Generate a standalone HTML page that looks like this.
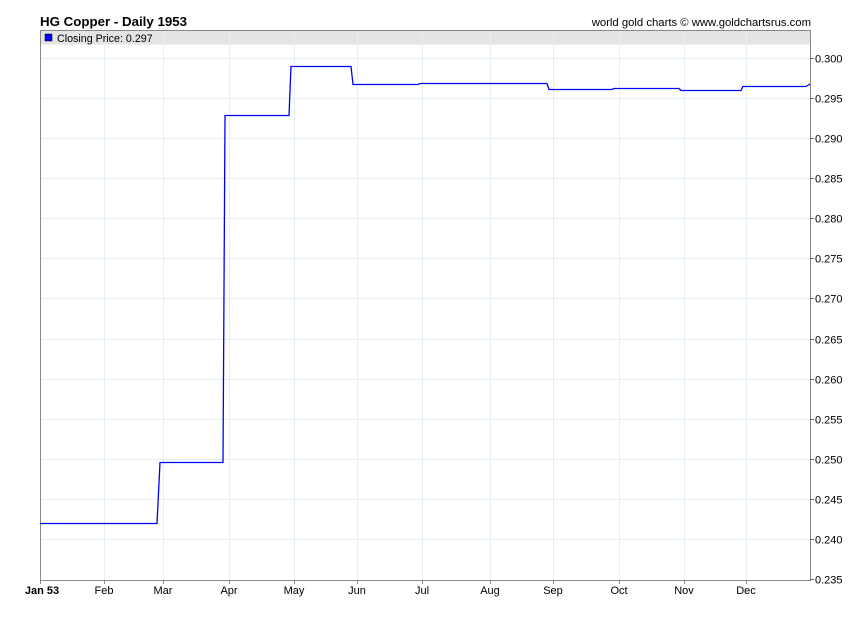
<!DOCTYPE html>
<html><head><meta charset="utf-8"><style>
body{margin:0;background:#fff;width:850px;height:616px;overflow:hidden;font-family:"Liberation Sans",Arial,sans-serif}
</style></head><body>
<svg width="850" height="616" xmlns="http://www.w3.org/2000/svg" font-family="Liberation Sans, Arial, sans-serif">
<rect x="40.5" y="30.5" width="770" height="14" fill="#e4e4e4"/>
<g stroke="#e3eef8" stroke-width="1">
<line x1="104.5" y1="30" x2="104.5" y2="580"/>
<line x1="163.5" y1="30" x2="163.5" y2="580"/>
<line x1="229.5" y1="30" x2="229.5" y2="580"/>
<line x1="294.5" y1="30" x2="294.5" y2="580"/>
<line x1="357.5" y1="30" x2="357.5" y2="580"/>
<line x1="422.5" y1="30" x2="422.5" y2="580"/>
<line x1="490.5" y1="30" x2="490.5" y2="580"/>
<line x1="553.5" y1="30" x2="553.5" y2="580"/>
<line x1="619.5" y1="30" x2="619.5" y2="580"/>
<line x1="684.5" y1="30" x2="684.5" y2="580"/>
<line x1="746.5" y1="30" x2="746.5" y2="580"/>
</g>
<g stroke="#e3eef8" stroke-width="1" id="hg"></g>
<g stroke="#888" stroke-width="1" fill="none">
<path d="M40.5 30.5 H810.5 V580.5 H40.5 Z"/>
</g>
<path d="M40 523.5 H157 L160 462.5 H223 L225 115.5 H289 L291 66.5 H351 L353 84.5 H418 L420 83.5 H547 L549 89.5 H612 L614 88.5 H679 L681 90.5 H741 L743 86.5 H806 L810 84" fill="none" stroke="#0000ff" stroke-width="1.3"/>
<rect x="45" y="34" width="7" height="7" fill="#0000ff" stroke="#000" stroke-width="0.5"/>
<text x="57" y="42" font-size="10.7" fill="#000">Closing Price: 0.297</text>
<text x="40" y="26" font-size="13.3" font-weight="bold" fill="#000">HG Copper - Daily 1953</text>
<text x="811" y="26" font-size="11.3" fill="#000" text-anchor="end">world gold charts © www.goldchartsrus.com</text>
<g id="yl" font-size="11" fill="#000"></g>
<g font-size="11" fill="#000" text-anchor="middle">
<text x="42" y="594" font-weight="bold">Jan 53</text>
<text x="104" y="594">Feb</text>
<text x="163" y="594">Mar</text>
<text x="229" y="594">Apr</text>
<text x="294" y="594">May</text>
<text x="357" y="594">Jun</text>
<text x="422" y="594">Jul</text>
<text x="490" y="594">Aug</text>
<text x="553" y="594">Sep</text>
<text x="619" y="594">Oct</text>
<text x="684" y="594">Nov</text>
<text x="746" y="594">Dec</text>
</g>
<g stroke="#888">
<line x1="40.5" y1="580" x2="40.5" y2="584"/>
<line x1="104.5" y1="580" x2="104.5" y2="584"/>
<line x1="163.5" y1="580" x2="163.5" y2="584"/>
<line x1="229.5" y1="580" x2="229.5" y2="584"/>
<line x1="294.5" y1="580" x2="294.5" y2="584"/>
<line x1="357.5" y1="580" x2="357.5" y2="584"/>
<line x1="422.5" y1="580" x2="422.5" y2="584"/>
<line x1="490.5" y1="580" x2="490.5" y2="584"/>
<line x1="553.5" y1="580" x2="553.5" y2="584"/>
<line x1="619.5" y1="580" x2="619.5" y2="584"/>
<line x1="684.5" y1="580" x2="684.5" y2="584"/>
<line x1="746.5" y1="580" x2="746.5" y2="584"/>
</g>
<g id="yt" stroke="#666"></g>
</svg>
<script>
var ns="http://www.w3.org/2000/svg",hg=document.getElementById('hg'),yl=document.getElementById('yl'),yt=document.getElementById('yt');
for(var i=0;i<=13;i++){var v=0.300-i*0.005;var y=Math.round(58+i*40.08)+0.5;
if(i<13){var l=document.createElementNS(ns,'line');l.setAttribute('x1',41);l.setAttribute('x2',810);l.setAttribute('y1',y);l.setAttribute('y2',y);hg.appendChild(l);}
var t=document.createElementNS(ns,'line');t.setAttribute('x1',810);t.setAttribute('x2',814);t.setAttribute('y1',y);t.setAttribute('y2',y);yt.appendChild(t);
var s=document.createElementNS(ns,'text');s.setAttribute('x',815);s.setAttribute('y',y+4);s.textContent=v.toFixed(3);yl.appendChild(s);}
</script>
</body></html>
